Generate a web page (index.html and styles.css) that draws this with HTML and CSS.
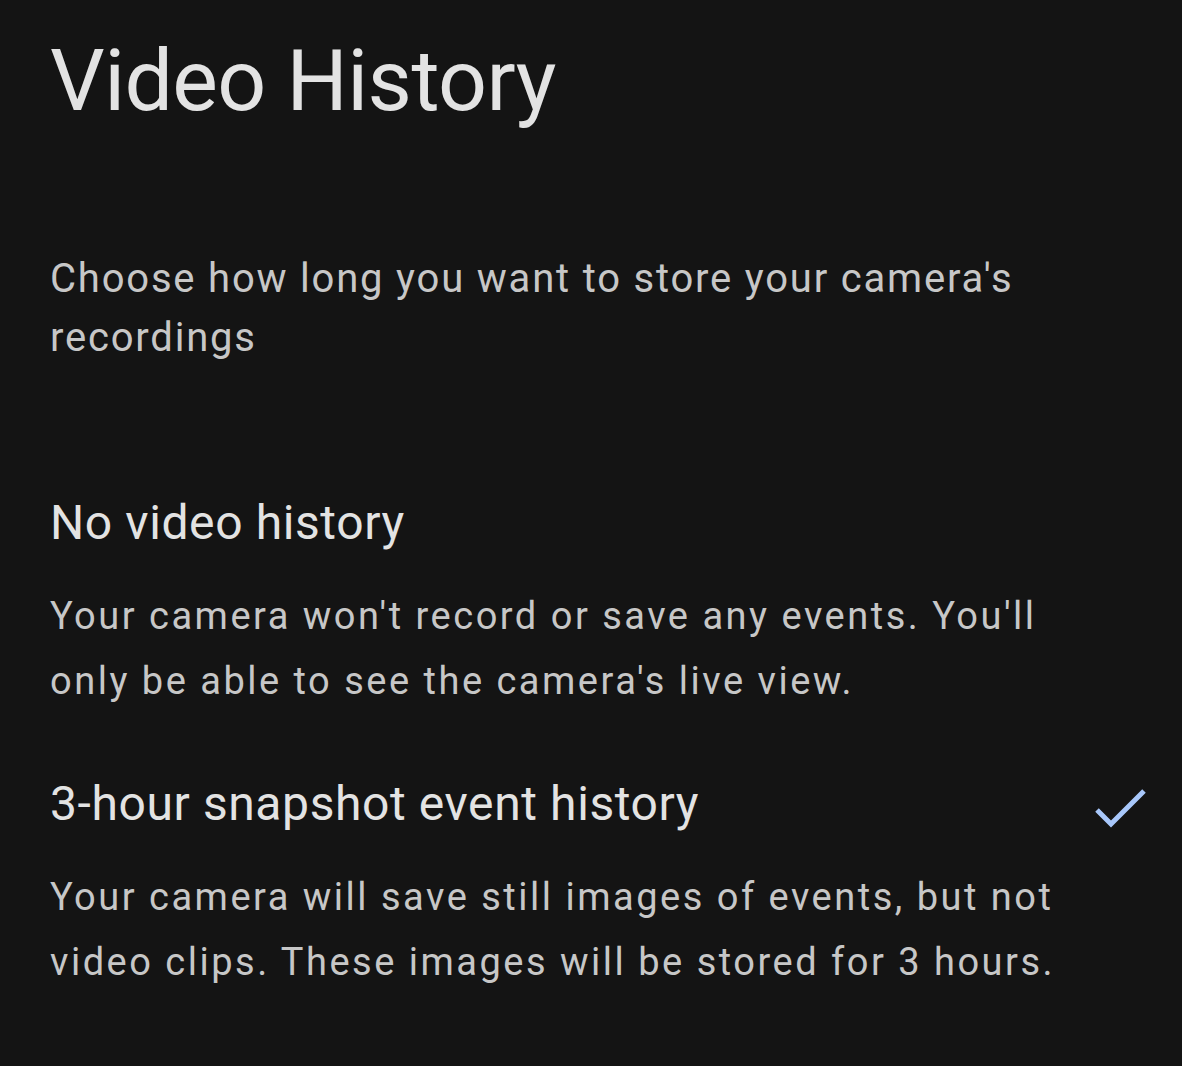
FILE: index.html
```html
<!DOCTYPE html>
<html lang="en">
<head>
<meta charset="utf-8">
<title>Video History</title>
<link rel="stylesheet" href="styles.css">
</head>
<body>
<main class="page">
  <h1 class="title">Video History</h1>
  <p class="intro">Choose how long you want to store your camera's recordings</p>
  <ul class="options">
    <li class="option">
      <div class="option-head">
        <span class="option-title">No video history</span>
      </div>
      <p class="option-desc">Your camera won't record or save any events. You'll only be able to see the camera's live view.</p>
    </li>
    <li class="option">
      <div class="option-head">
        <span class="option-title">3-hour snapshot event history</span>
        <svg class="check" viewBox="0 0 54 44" width="54" height="44" aria-hidden="true">
          <path d="M3 22 L17 36 L50 3" fill="none" stroke="#a8c7fa" stroke-width="5"/>
        </svg>
      </div>
      <p class="option-desc">Your camera will save still images of events, but not video clips. These images will be stored for 3 hours.</p>
    </li>
  </ul>
</main>
</body>
</html>
```

FILE: styles.css
```css
html, body {
  margin: 0;
  padding: 0;
  background: #141414;
}
body {
  font-family: Roboto, "Liberation Sans", sans-serif;
  color: #e3e3e3;
}
.page {
  padding: 26px 34px 0 50px;
}
.title {
  margin: 0;
  font-weight: 400;
  font-size: 86px;
  line-height: 110px;
  color: #e3e3e3;
  letter-spacing: -0.6px;
}
.intro {
  margin: 113px 0 0;
  font-size: 40px;
  line-height: 59px;
  letter-spacing: 1.8px;
  color: #c7c7c7;
  max-width: 1000px;
}
.options {
  list-style: none;
  margin: 0;
  padding: 0;
}
.option-head {
  display: flex;
  align-items: center;
  justify-content: space-between;
}
.option:first-child {
  margin-top: 126px;
}
.option + .option {
  margin-top: 60px;
}
.option-title {
  font-size: 48px;
  line-height: 60px;
  letter-spacing: 0.6px;
  color: #e3e3e3;
}
.option-desc {
  margin: 31px 0 0;
  font-size: 38px;
  line-height: 65px;
  letter-spacing: 2.5px;
  color: #c7c7c7;
  max-width: 1020px;
}
.check {
  display: block;
  margin-top: 12px;
}
```
